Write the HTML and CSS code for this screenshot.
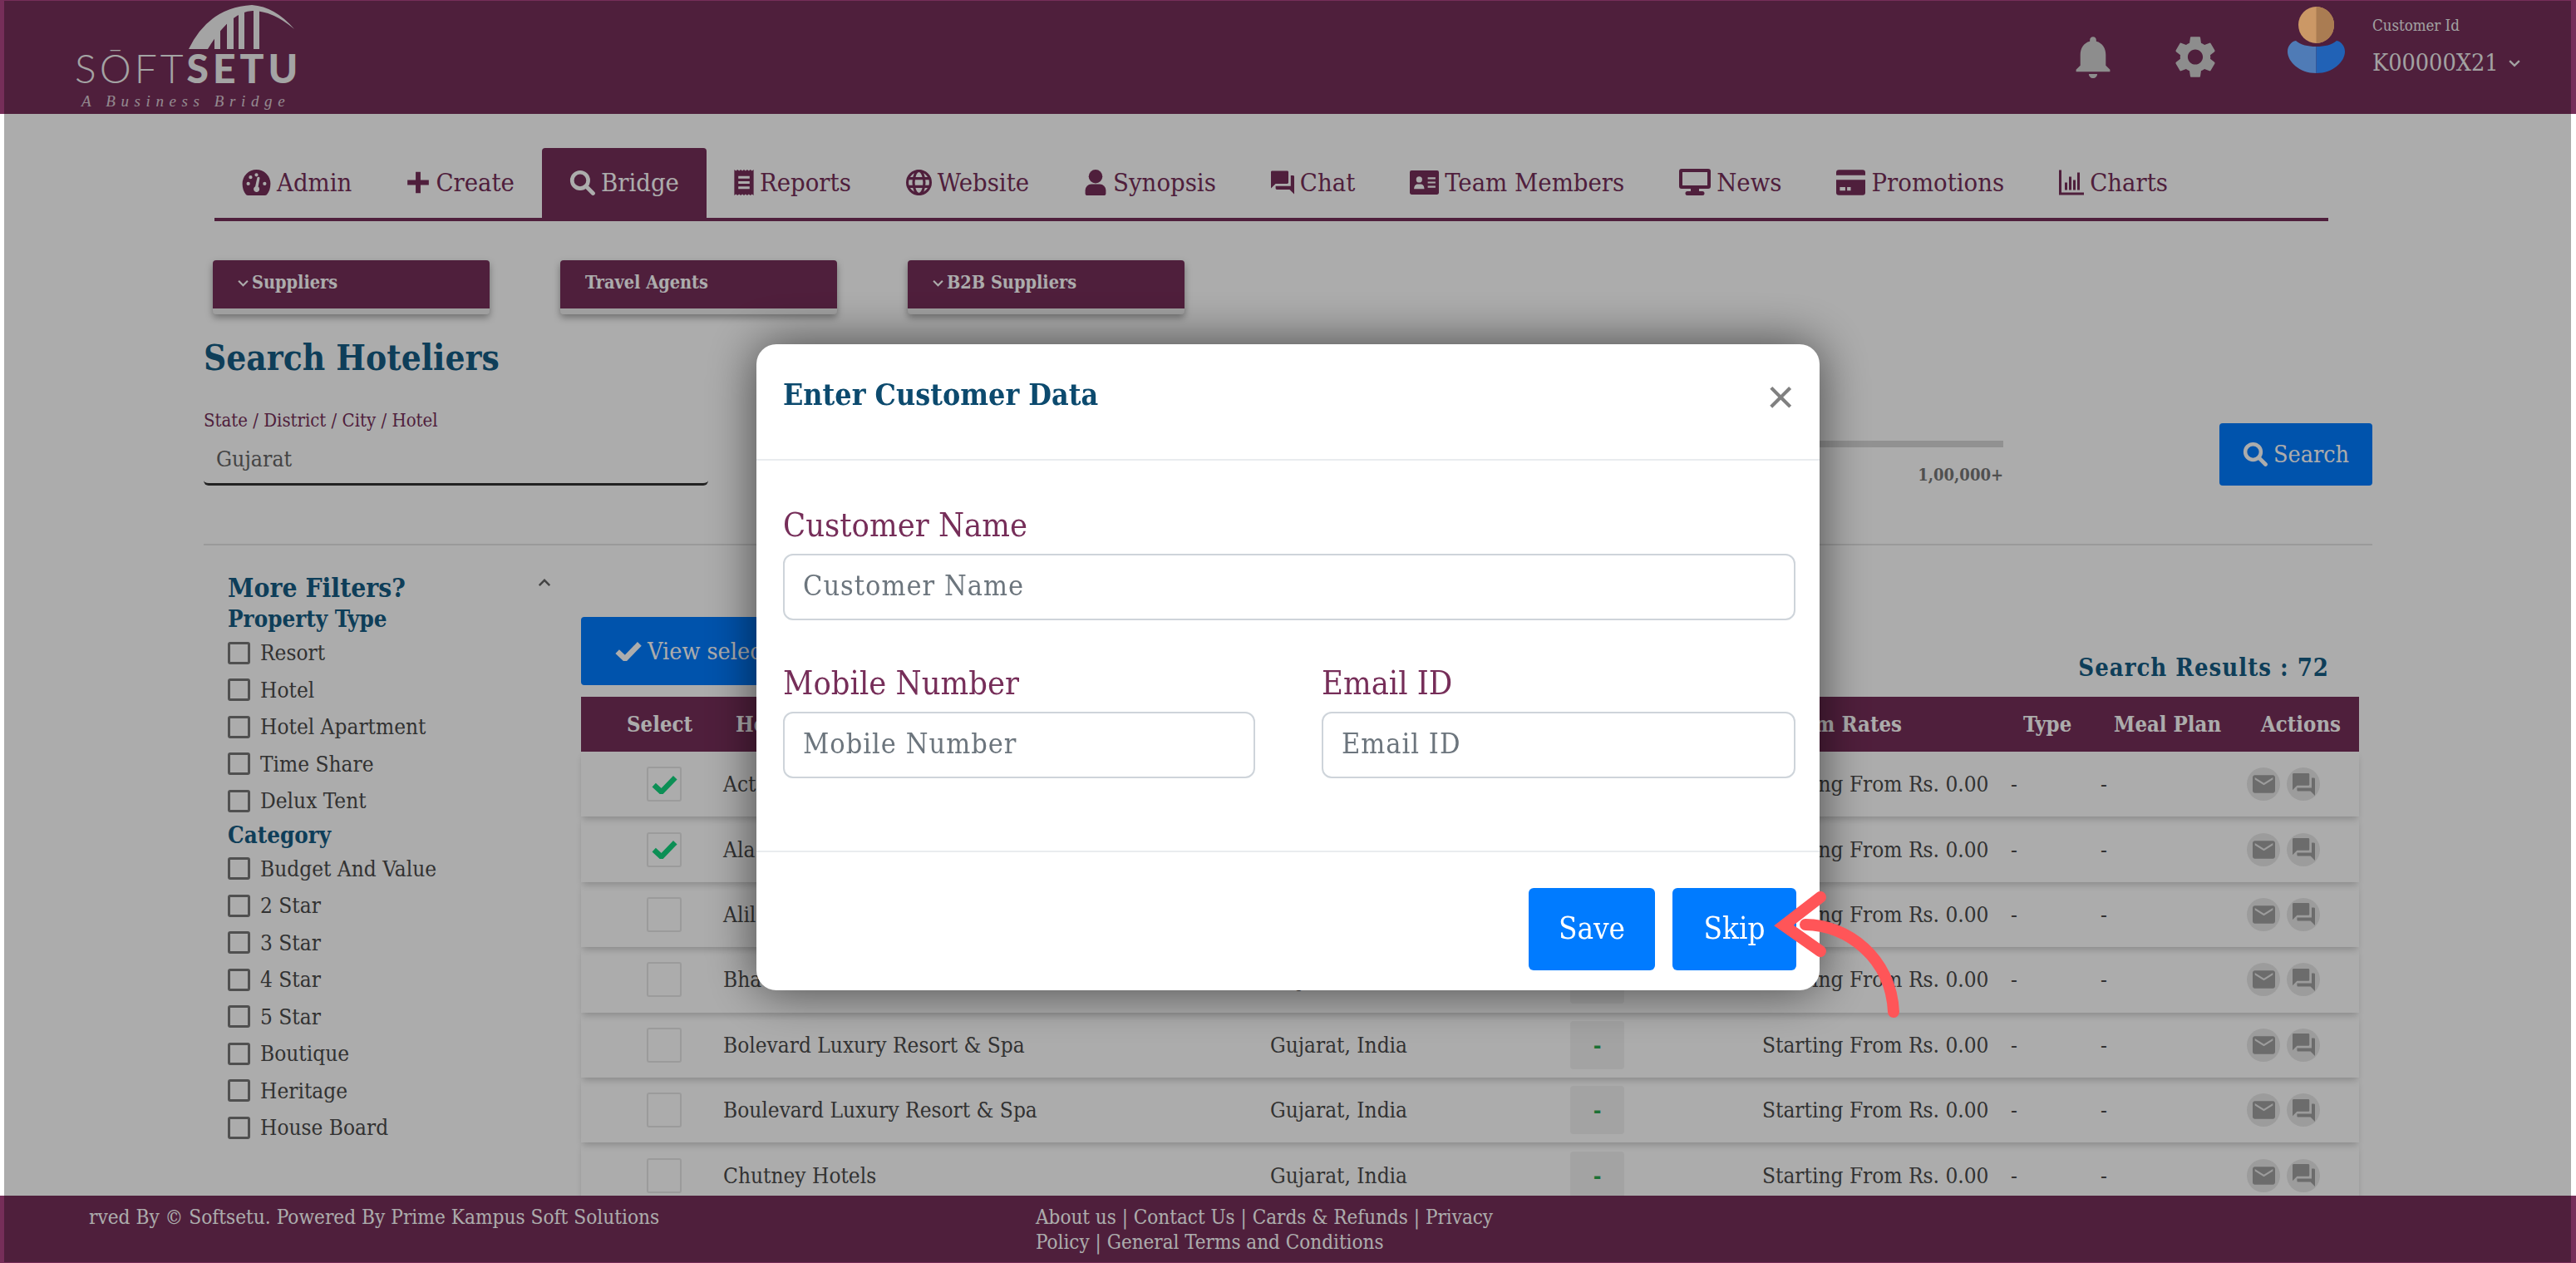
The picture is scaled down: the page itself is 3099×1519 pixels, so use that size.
FILE: index.html
```html
<!DOCTYPE html>
<html lang="en">
<head>
    <meta charset="UTF-8">
    <title>SoftSetu - Search Hoteliers</title>
    <link rel="stylesheet" href="styles.css">
</head>
<body>
    <svg class="sprite" aria-hidden="true">
        <symbol id="i-gauge" viewBox="0 0 24 22"><path fill-rule="evenodd" d="M12 0a12 12 0 0 0-12 12c0 3.800 1.200 7 3.200 9.500 .5 .4 1 .5 1.500 .5h14.600c.5 0 1-.1 1.500-.5 2-2.500 3.200-5.700 3.200-9.500A12 12 0 0 0 12 0zM12 3a1.500 1.500 0 1 1 0 3 1.500 1.500 0 0 1 0-3zM5 13.500a1.500 1.500 0 1 1 0-3 1.500 1.500 0 0 1 0 3zM7 8a1.500 1.500 0 1 1 0-3 1.500 1.500 0 0 1 0 3zM14.800 7.500l-1.300 7.100a2.500 2.500 0 1 1-2.500-.2l1.600-7.300a1.100 1.100 0 0 1 2.200 .4zM19 13.500a1.500 1.500 0 1 1 0-3 1.500 1.500 0 0 1 0 3z"/></symbol>
        <symbol id="i-plus" viewBox="0 0 24 24"><path d="M9.500 1h5v8.500H23v5h-8.500V23h-5v-8.500H1v-5h8.500z"/></symbol>
        <symbol id="i-search" viewBox="0 0 24 24"><circle cx="10" cy="10" r="7.500" fill="none" stroke="currentColor" stroke-width="3.600"/><path d="M15.500 15.500l6.500 6.500" fill="none" stroke="currentColor" stroke-width="3.800" stroke-linecap="round"/></symbol>
        <symbol id="i-receipt" viewBox="0 0 24 32"><path fill-rule="evenodd" d="M0 0l2 1.500L4 0l2 1.500L8 0l2 1.500L12 0l2 1.500L16 0l2 1.500L20 0l2 1.500L24 0v32l-2-1.500-2 1.500-2-1.500-2 1.500-2-1.500-2 1.500-2-1.500-2 1.500-2-1.500-2 1.500-2-1.500L0 32zM5 8v3h14V8zm0 6.500v3h14v-3zM5 21v3h14v-3z"/></symbol>
        <symbol id="i-globe" viewBox="0 0 24 24"><g fill="none" stroke="currentColor" stroke-width="2.400"><circle cx="12" cy="12" r="10.800"/><ellipse cx="12" cy="12" rx="5" ry="10.800"/><path d="M1.500 8.200h21M1.500 15.800h21"/></g></symbol>
        <symbol id="i-user" viewBox="0 0 24 30"><circle cx="12" cy="8" r="8"/><path d="M7 17h10a7 7 0 0 1 7 7v3.500a2.500 2.500 0 0 1-2.500 2.500h-19A2.500 2.500 0 0 1 0 27.500V24a7 7 0 0 1 7-7z"/></symbol>
        <symbol id="i-forum" viewBox="2 2 20 20"><path d="M21 6h-2v9H6v2c0 .55.45 1 1 1h11l4 4V7c0-.55-.45-1-1-1zm-4 6V3c0-.55-.45-1-1-1H3c-.55 0-1 .45-1 1v14l4-4h10c.55 0 1-.45 1-1z"/></symbol>
        <symbol id="i-idcard" viewBox="0 0 34 28"><path fill-rule="evenodd" d="M2 0h30a2 2 0 0 1 2 2v24a2 2 0 0 1-2 2H2a2 2 0 0 1-2-2V2a2 2 0 0 1 2-2zM11 7a3.500 3.500 0 1 0 0 7 3.500 3.500 0 0 0 0-7zM5 21.500h12c0-3.500-2-5.500-4-5.500H9c-2 0-4 2-4 5.500zM21 8v2h9V8zm0 5v2h9v-2zm0 5v2h9v-2z"/></symbol>
        <symbol id="i-desktop" viewBox="0 0 38 32"><path fill-rule="evenodd" d="M3 0h32a3 3 0 0 1 3 3v18a3 3 0 0 1-3 3H24v3h4a2.500 2.500 0 0 1 0 5H10a2.500 2.500 0 0 1 0-5h4v-3H3a3 3 0 0 1-3-3V3a3 3 0 0 1 3-3zm1 4v16h30V4z"/></symbol>
        <symbol id="i-promo" viewBox="0 0 32 28"><path fill-rule="evenodd" d="M3 0h26a3 3 0 0 1 3 3v3H0V3a3 3 0 0 1 3-3zM0 11h32v14a3 3 0 0 1-3 3H3a3 3 0 0 1-3-3zm4 8v4h6v-4zm8 0v4h4v-4z"/></symbol>
        <symbol id="i-chart" viewBox="0 0 30 30"><path d="M0 0h3v27h27v3H0zM7 15h3v9H7zM12 8h3v16h-3zM17 12h3v12h-3zM22 3h3v21h-3z"/></symbol>
        <symbol id="i-bell" viewBox="4 2 16 20"><path d="M12 22c1.100 0 2-.9 2-2h-4c0 1.100.89 2 2 2zm6-6v-5c0-3.070-1.640-5.640-4.500-6.320V4c0-.83-.67-1.500-1.500-1.500s-1.500.67-1.500 1.500v.68C7.630 5.360 6 7.920 6 11v5l-2 2v1h16v-1l-2-2z"/></symbol>
        <symbol id="i-gear" viewBox="2.500 2 19 20"><path d="M19.140 12.940c.04-.3.06-.61.06-.94 0-.32-.02-.64-.07-.94l2.030-1.580c.18-.14.23-.41.12-.61l-1.920-3.320c-.12-.22-.37-.29-.59-.22l-2.390.96c-.5-.38-1.030-.7-1.620-.94l-.36-2.540c-.04-.24-.24-.41-.48-.41h-3.840c-.24 0-.43.17-.47.41l-.36 2.540c-.59.24-1.130.57-1.620.94l-2.390-.96c-.22-.08-.47 0-.59.22L2.740 8.870c-.12.21-.08.47.12.61l2.030 1.580c-.05.3-.09.63-.09.94s.02.64.07.94l-2.030 1.580c-.18.14-.23.41-.12.61l1.920 3.320c.12.22.37.29.59.22l2.390-.96c.5.38 1.030.7 1.620.94l.36 2.540c.05.24.24.41.48.41h3.840c.24 0 .44-.17.47-.41l.36-2.540c.59-.24 1.130-.56 1.620-.94l2.390.96c.22.08.47 0 .59-.22l1.920-3.320c.12-.22.07-.47-.12-.61l-2.010-1.580zM12 15.600c-1.980 0-3.600-1.620-3.600-3.600s1.620-3.600 3.600-3.600 3.600 1.620 3.600 3.600-1.620 3.600-3.600 3.600z"/></symbol>
        <symbol id="i-mail" viewBox="2 4 20 16"><path d="M20 4H4c-1.100 0-2 .9-2 2v12c0 1.100.9 2 2 2h16c1.100 0 2-.9 2-2V6c0-1.100-.9-2-2-2zm0 4l-8 5-8-5V6l8 5 8-5v2z"/></symbol>
        <symbol id="i-check" viewBox="0 0 24 18"><path d="M2 9.500l7 6.500L22 2.500" fill="none" stroke="currentColor" stroke-width="5"/></symbol>
        <symbol id="i-chev" viewBox="0 0 12 8"><path d="M1 1.500l5 5 5-5" fill="none" stroke="currentColor" stroke-width="2"/></symbol>
    </svg>

    <div class="page">
        <header class="topbar">
            <div class="logo">
                <svg class="logo-arc" viewBox="0 0 135 56"><path d="M2 55Q26 5 78 2q28 2 51 29-26-22-50-22Q52 10 25 55z"/><path d="M33 32h7v23h-7zM48 17h8v38h-8zM62 9h7v46h-7zM80 6h7v49h-7z"/></svg>
                <div class="logo-name"><span class="logo-thin">SŌFT</span><b>SETU</b></div>
                <div class="logo-tag">A Business Bridge</div>
            </div>
            <div class="topbar-right">
                <svg class="bell"><use href="#i-bell"/></svg>
                <svg class="gear"><use href="#i-gear"/></svg>
                <svg class="avatar" viewBox="0 0 69 80">
                    <ellipse cx="34.500" cy="22" rx="21.500" ry="22" fill="#cb9866"/>
                    <path d="M34.500 0a21.500 22 0 0 1 0 44z" fill="#aa7c52"/>
                    <path d="M34.500 80C14 80 0 66 0 54c0-6 4-12 10-13 6 5 14 7 24.500 7z" fill="#4f7bb6"/>
                    <path d="M34.500 80C55 80 69 66 69 54c0-6-4-12-10-13-6 5-14 7-24.500 7z" fill="#2162b6"/>
                </svg>
                <div class="customer">
                    <div class="customer-label">Customer Id</div>
                    <div class="customer-id">K00000X21<svg class="chev"><use href="#i-chev"/></svg></div>
                </div>
            </div>
        </header>

        <main class="content">
            <nav class="tabs">
                <a class="tab"><svg class="ico w35"><use href="#i-gauge"/></svg>Admin</a>
                <a class="tab"><svg class="ico w28"><use href="#i-plus"/></svg>Create</a>
                <a class="tab active"><svg class="ico w31"><use href="#i-search"/></svg>Bridge</a>
                <a class="tab"><svg class="ico w24"><use href="#i-receipt"/></svg>Reports</a>
                <a class="tab"><svg class="ico w31"><use href="#i-globe"/></svg>Website</a>
                <a class="tab"><svg class="ico w28"><use href="#i-user"/></svg>Synopsis</a>
                <a class="tab"><svg class="ico w28"><use href="#i-forum"/></svg>Chat</a>
                <a class="tab"><svg class="ico w35"><use href="#i-idcard"/></svg>Team Members</a>
                <a class="tab"><svg class="ico w38"><use href="#i-desktop"/></svg>News</a>
                <a class="tab"><svg class="ico w35"><use href="#i-promo"/></svg>Promotions</a>
                <a class="tab"><svg class="ico w30"><use href="#i-chart"/></svg>Charts</a>
            </nav>

            <div class="cat-row">
                <button class="cat-btn"><svg class="chev"><use href="#i-chev"/></svg>Suppliers</button>
                <button class="cat-btn">Travel Agents</button>
                <button class="cat-btn"><svg class="chev"><use href="#i-chev"/></svg>B2B Suppliers</button>
            </div>

            <h1 class="page-title">Search Hoteliers</h1>

            <div class="search-row">
                <div class="field">
                    <label class="field-label">State / District / City / Hotel</label>
                    <div class="field-value">Gujarat</div>
                </div>
                <div class="range">
                    <div class="range-track"></div>
                    <div class="range-max">1,00,000+</div>
                </div>
                <button class="btn-blue search-btn"><svg class="ico w31"><use href="#i-search"/></svg>Search</button>
            </div>

            <div class="results">
                <aside class="filters">
                    <div class="filters-head">
                        <span>More Filters?</span>
                        <svg class="chev up"><use href="#i-chev"/></svg>
                    </div>
                    <h3 class="filter-title">Property Type</h3>
                    <label class="filter"><input type="checkbox">Resort</label>
                    <label class="filter"><input type="checkbox">Hotel</label>
                    <label class="filter"><input type="checkbox">Hotel Apartment</label>
                    <label class="filter"><input type="checkbox">Time Share</label>
                    <label class="filter"><input type="checkbox">Delux Tent</label>
                    <h3 class="filter-title">Category</h3>
                    <label class="filter"><input type="checkbox">Budget And Value</label>
                    <label class="filter"><input type="checkbox">2 Star</label>
                    <label class="filter"><input type="checkbox">3 Star</label>
                    <label class="filter"><input type="checkbox">4 Star</label>
                    <label class="filter"><input type="checkbox">5 Star</label>
                    <label class="filter"><input type="checkbox">Boutique</label>
                    <label class="filter"><input type="checkbox">Heritage</label>
                    <label class="filter"><input type="checkbox">House Board</label>
                </aside>

                <section class="listing">
                    <div class="listing-top">
                        <button class="btn-blue view-btn"><svg class="ico w31"><use href="#i-check"/></svg>View selected</button>
                        <div class="result-count">Search Results : 72</div>
                    </div>
                    <div class="grid-row grid-head">
                        <span class="c-select">Select</span>
                        <span>Hotel Name</span>
                        <span>Location</span>
                        <span>Rating</span>
                        <span class="c-rates">Room Rates</span>
                        <span>Type</span>
                        <span>Meal Plan</span>
                        <span>Actions</span>
                    </div>
                    <div class="grid-row item">
                        <span class="c-select"><span class="tick on"><svg><use href="#i-check"/></svg></span></span>
                        <span>Act</span><span>Gujarat, India</span><span class="star"></span>
                        <span>Starting From Rs. 0.00</span><span>-</span><span>-</span>
                        <span class="actions"><i><svg class="mail"><use href="#i-mail"/></svg></i><i><svg class="forum"><use href="#i-forum"/></svg></i></span>
                    </div>
                    <div class="grid-row item">
                        <span class="c-select"><span class="tick on"><svg><use href="#i-check"/></svg></span></span>
                        <span>Ala</span><span>Gujarat, India</span><span class="star"></span>
                        <span>Starting From Rs. 0.00</span><span>-</span><span>-</span>
                        <span class="actions"><i><svg class="mail"><use href="#i-mail"/></svg></i><i><svg class="forum"><use href="#i-forum"/></svg></i></span>
                    </div>
                    <div class="grid-row item">
                        <span class="c-select"><span class="tick"></span></span>
                        <span>Alil</span><span>Gujarat, India</span><span class="star"></span>
                        <span>Starting From Rs. 0.00</span><span>-</span><span>-</span>
                        <span class="actions"><i><svg class="mail"><use href="#i-mail"/></svg></i><i><svg class="forum"><use href="#i-forum"/></svg></i></span>
                    </div>
                    <div class="grid-row item">
                        <span class="c-select"><span class="tick"></span></span>
                        <span>Bha</span><span>Gujarat, India</span><span class="star"></span>
                        <span>Starting From Rs. 0.00</span><span>-</span><span>-</span>
                        <span class="actions"><i><svg class="mail"><use href="#i-mail"/></svg></i><i><svg class="forum"><use href="#i-forum"/></svg></i></span>
                    </div>
                    <div class="grid-row item">
                        <span class="c-select"><span class="tick"></span></span>
                        <span>Bolevard Luxury Resort &amp; Spa</span><span>Gujarat, India</span><span class="star">-</span>
                        <span>Starting From Rs. 0.00</span><span>-</span><span>-</span>
                        <span class="actions"><i><svg class="mail"><use href="#i-mail"/></svg></i><i><svg class="forum"><use href="#i-forum"/></svg></i></span>
                    </div>
                    <div class="grid-row item">
                        <span class="c-select"><span class="tick"></span></span>
                        <span>Boulevard Luxury Resort &amp; Spa</span><span>Gujarat, India</span><span class="star">-</span>
                        <span>Starting From Rs. 0.00</span><span>-</span><span>-</span>
                        <span class="actions"><i><svg class="mail"><use href="#i-mail"/></svg></i><i><svg class="forum"><use href="#i-forum"/></svg></i></span>
                    </div>
                    <div class="grid-row item">
                        <span class="c-select"><span class="tick"></span></span>
                        <span>Chutney Hotels</span><span>Gujarat, India</span><span class="star">-</span>
                        <span>Starting From Rs. 0.00</span><span>-</span><span>-</span>
                        <span class="actions"><i><svg class="mail"><use href="#i-mail"/></svg></i><i><svg class="forum"><use href="#i-forum"/></svg></i></span>
                    </div>
                </section>
            </div>
        </main>

        <footer class="footer">
            <div class="footer-copy">rved By © Softsetu. Powered By Prime Kampus Soft Solutions</div>
            <div class="footer-links">About us | Contact Us | Cards &amp; Refunds | Privacy Policy | General Terms and Conditions</div>
        </footer>
    </div>

    <div class="backdrop"></div>

    <div class="modal">
        <div class="modal-head">
            <h2>Enter Customer Data</h2>
            <span class="modal-close">×</span>
        </div>
        <div class="modal-body">
            <div class="form-group">
                <label>Customer Name</label>
                <input type="text" placeholder="Customer Name">
            </div>
            <div class="form-cols">
                <div class="form-group">
                    <label>Mobile Number</label>
                    <input type="text" placeholder="Mobile Number">
                </div>
                <div class="form-group">
                    <label>Email ID</label>
                    <input type="text" placeholder="Email ID">
                </div>
            </div>
        </div>
        <div class="modal-foot">
            <button class="btn-modal save">Save</button>
            <button class="btn-modal skip">Skip</button>
        </div>
    </div>

    <!-- red hint arrow pointing at Skip -->
    <svg class="hint-arrow" viewBox="0 0 160 160">
        <path d="M60 10L16 44l44 31" fill="none" stroke="#ff5558" stroke-width="14" stroke-linecap="round" stroke-linejoin="miter"/>
        <path d="M42 43c50 0 103 40 106 105" fill="none" stroke="#ff5558" stroke-width="14" stroke-linecap="round"/>
    </svg>
</body>
</html>
```
FILE: styles.css
```css
/* Generel */
* {
    box-sizing: border-box;
}

html, body {
    margin: 0;
    height: 100%;
    overflow: hidden;
    background: #fff;
    font-family: "DejaVu Serif Condensed", "DejaVu Serif", serif;
    color: #4a4a4a;
}

.sprite {
    display: none;
}

svg {
    fill: currentColor;
}

button {
    font-family: inherit;
    border: 0;
}

.page {
    display: flex;
    flex-direction: column;
    height: 100vh;
}

/* Top bar */
.topbar {
    height: 137px;
    flex: none;
    display: flex;
    justify-content: space-between;
    background: #762e59;
    padding: 4px 0 0 90px;
}

.logo {
    width: 272px;
    color: #f4f4f4;
    display: flex;
    flex-direction: column;
}

.logo-arc {
    width: 135px;
    height: 56px;
    margin-left: 135px;
    flex: none;
}

.logo-name {
    font-family: Lato, sans-serif;
    font-size: 48px;
    line-height: 38px;
    margin-top: 3px;
    white-space: nowrap;
}

.logo-thin {
    font-weight: 300;
    letter-spacing: 4px;
}

.logo-name b {
    font-weight: 900;
    letter-spacing: 5px;
}

.logo-tag {
    font-family: "Liberation Serif", serif;
    font-style: italic;
    font-size: 19px;
    line-height: 21px;
    letter-spacing: 6.600px;
    margin: 10px 0 0 8px;
    white-space: nowrap;
    opacity: .8;
}

.topbar-right {
    display: flex;
    align-items: flex-start;
    color: #d2d2d2;
}

.bell {
    width: 44px;
    height: 51px;
    margin-top: 39px;
}

.gear {
    width: 48px;
    height: 51px;
    margin: 39px 0 0 77px;
}

.avatar {
    position: relative;
    z-index: 20;
    width: 69px;
    height: 80px;
    margin: 4px 0 0 87px;
}

.customer {
    margin: 0 0 0 33px;
    width: 245px;
    color: #f0f0f0;
}

.customer-label {
    font-size: 18.500px;
    line-height: 24px;
    margin-top: 15px;
}

.customer-id {
    font-size: 28.500px;
    line-height: 40px;
    margin-top: 13px;
}

.chev {
    width: 14px;
    height: 10px;
}

.customer-id .chev {
    margin-left: 12px;
    vertical-align: 4px;
}

/* Main */
.content {
    flex: 1;
    overflow: hidden;
    padding: 0 245px;
}

.tabs {
    margin: 41px 53px 0 13px;
    height: 88px;
    display: flex;
    border-bottom: 4px solid #762e59;
}

.tab {
    display: flex;
    align-items: center;
    height: 84px;
    padding: 0 33px 2px;
    font-size: 30.700px;
    color: #762e59;
    white-space: nowrap;
    gap: 7px;
}

.tab.active {
    background: #762e59;
    color: #fff;
    border-radius: 4px 4px 0 0;
}

.ico {
    height: 31px;
    flex: none;
}

.w24 { width: 24px; }
.w28 { width: 28px; }
.w30 { width: 30px; }
.w31 { width: 31px; }
.w35 { width: 35px; }
.w38 { width: 38px; height: 32px; }

.cat-row {
    display: flex;
    gap: 85px;
    margin: 47px 0 0 11px;
}

.cat-btn {
    width: 333px;
    height: 65px;
    background: #762e59;
    color: #fff;
    font-size: 21.500px;
    font-weight: bold;
    text-align: left;
    padding: 0 30px 6px;
    border-bottom: 7px solid #ececec;
    border-radius: 4px;
    box-shadow: 0 4px 8px rgba(0,0,0,.35);
}

.cat-btn .chev {
    margin-right: 4px;
    width: 13px;
    height: 9px;
    vertical-align: 2px;
}

.page-title {
    font-size: 42px;
    line-height: 52px;
    font-weight: bold;
    margin: 27px 0 0;
    color: #155d85;
}

.search-row {
    display: flex;
    align-items: flex-end;
    margin-top: 33px;
    padding-bottom: 70px;
    border-bottom: 2px solid #e4e4e4;
    height: 166px;
}

.field {
    width: 607px;
}

.field-label {
    display: block;
    color: #762e59;
    font-size: 22px;
    line-height: 28px;
}

.field-value {
    height: 64px;
    line-height: 64px;
    padding-left: 15px;
    font-size: 26.500px;
    color: #666;
    border-bottom: 3px solid #333;
    border-radius: 0 0 6px 6px;
}

.range {
    margin: 0 260px 0 150px;
    flex: 1;
    align-self: flex-start;
    padding-top: 40px;
    text-align: right;
}

.range-track {
    height: 8px;
    background: #d8d8d8;
}

.range-max {
    font-size: 20px;
    font-weight: bold;
    margin-top: 21px;
    color: #777;
}

.btn-blue {
    background: #007bff;
    color: #fff;
    border-radius: 4px;
    font-size: 28.500px;
    display: flex;
    align-items: center;
    gap: 7px;
}

.search-btn {
    width: 184px;
    height: 75px;
    justify-content: center;
    padding-bottom: 2px;
}

.search-btn .ico {
    width: 30px;
    height: 30px;
}

.results {
    display: flex;
}

.filters {
    width: 454px;
    flex: none;
    padding: 30px 0 0 29px;
}

.filters-head {
    display: flex;
    justify-content: space-between;
    align-items: center;
    width: 390px;
    height: 40px;
    font-size: 31.600px;
    font-weight: bold;
    color: #155d85;
}

.filters-head .up {
    transform: rotate(180deg);
    width: 18px;
    margin-bottom: 10px;
    color: #666;
}

.filter-title {
    margin: 0;
    height: 37px;
    line-height: 37px;
    font-size: 27.500px;
    font-weight: bold;
    color: #155d85;
}

.filter {
    display: flex;
    align-items: center;
    height: 44.500px;
    font-size: 26px;
    gap: 12px;
}

.filter input {
    appearance: none;
    width: 27px;
    height: 27px;
    margin: 0;
    border: 3px solid #777;
    border-radius: 3px;
}

.listing {
    flex: 1;
    margin-right: 16px;
    padding-top: 86px;
}

.listing-top {
    display: flex;
    justify-content: space-between;
    align-items: flex-end;
    height: 82px;
    margin-bottom: 14px;
    padding-right: 36px;
}

.view-btn {
    width: 400px;
    height: 82px;
    padding-left: 41px;
}

.view-btn .ico {
    width: 32px;
    height: 24px;
}

.result-count {
    font-size: 29px;
    font-weight: bold;
    line-height: 40px;
    padding-bottom: 1px;
    color: #155d85;
    letter-spacing: 1px;
}

/* Tabel som grid */
.grid-row {
    display: grid;
    grid-template-columns: 171px 658px 361px 231px 299px 108px 176px 135px;
    align-items: center;
    font-size: 26px;
}

.grid-head {
    height: 66px;
    background: #762e59;
    color: #fff;
    font-weight: bold;
    font-size: 25.500px;
}

.grid-head .c-select {
    padding-left: 55px;
}

.grid-head span:nth-child(2) {
    padding-left: 15px;
}

.grid-head .c-rates {
    padding-left: 0;
    white-space: nowrap;
    text-align: right;
    margin-right: 131px;
}

.grid-head span:nth-child(6) { padding-left: 15px; }
.grid-head span:nth-child(7) { padding-left: 16px; }
.grid-head span:nth-child(8) { padding-left: 17px; }

.item {
    height: 78.400px;
    box-shadow: 0 5px 8px -2px rgba(0,0,0,.2);
}

.item .c-select {
    padding-left: 79px;
}

.tick {
    display: flex;
    align-items: center;
    justify-content: center;
    width: 42px;
    height: 42px;
    border: 2px solid #e6e6e6;
    border-radius: 3px;
}

.tick svg {
    width: 31px;
    height: 23px;
    color: #12d47e;
}

.star {
    width: 65px;
    height: 58px;
    line-height: 58px;
    text-align: center;
    background: #f2f2f2;
    border-radius: 4px;
    color: #2aa84f;
    font-weight: bold;
}

.actions {
    display: flex;
    gap: 8px;
    margin-left: 0;
}

.actions i {
    width: 40px;
    height: 40px;
    border-radius: 50%;
    background: #e8e8e8;
    display: flex;
    align-items: center;
    justify-content: center;
    color: #a0a0a0;
}

.actions .mail {
    width: 27px;
    height: 22px;
}

.actions .forum {
    width: 27px;
    height: 27px;
}

/* Footer */
.footer {
    height: 81px;
    flex: none;
    display: flex;
    background: #762e59;
    color: #fff;
    font-size: 24px;
    line-height: 30px;
    padding: 11px 0 0 107px;
}

.footer-copy {
    width: 1139px;
    font-size: 24.200px;
    white-space: nowrap;
}

.footer-links {
    width: 570px;
}

/* Modal */
.backdrop {
    position: fixed;
    inset: 1px 6px 1px 5px;
    background: rgba(0,0,0,.325);
    z-index: 10;
}

.modal {
    position: fixed;
    left: 910px;
    top: 414px;
    width: 1279px;
    height: 777px;
    background: #fff;
    border-radius: 24px;
    box-shadow: 0 0 60px rgba(0,0,0,.6);
    z-index: 30;
    display: flex;
    flex-direction: column;
}

.modal-head {
    height: 140px;
    flex: none;
    display: flex;
    justify-content: space-between;
    padding: 0 30px 0 32px;
    border-bottom: 2px solid #e9ecef;
}

.modal-head h2 {
    margin: 41px 0 0;
    font-size: 35.500px;
    line-height: 40px;
    font-weight: bold;
    color: #0c4a6e;
}

.modal-close {
    font-family: "Liberation Sans", sans-serif;
    font-size: 58px;
    line-height: 60px;
    margin-top: 33px;
    color: #808080;
}

.modal-body {
    flex: 1;
    padding: 54px 29px 0 32px;
}

.form-group label {
    display: block;
    font-size: 39.500px;
    line-height: 46px;
    color: #762e59;
}

.form-group input {
    display: block;
    width: 100%;
    height: 80px;
    margin-top: 12px;
    padding: 0 22px 4px;
    border: 2px solid #ced4da;
    border-radius: 12px;
    font-family: inherit;
    font-size: 34px;
    letter-spacing: 1px;
}

.form-group input::placeholder {
    color: #6c757d;
}

.form-cols {
    display: grid;
    grid-template-columns: 568px 570px;
    gap: 80px;
    margin-top: 52px;
}

.modal-foot {
    height: 168px;
    flex: none;
    display: flex;
    justify-content: flex-end;
    gap: 21px;
    padding: 43px 28px 0 0;
    border-top: 2px solid #e9ecef;
}

.btn-modal {
    height: 99px;
    padding-bottom: 3px;
    background: #007bff;
    color: #fff;
    font-size: 36.500px;
    border-radius: 6px;
}

.save {
    width: 152px;
}

.skip {
    width: 149px;
}

.hint-arrow {
    position: fixed;
    left: 2130px;
    top: 1069px;
    width: 160px;
    height: 160px;
    z-index: 40;
}
```
